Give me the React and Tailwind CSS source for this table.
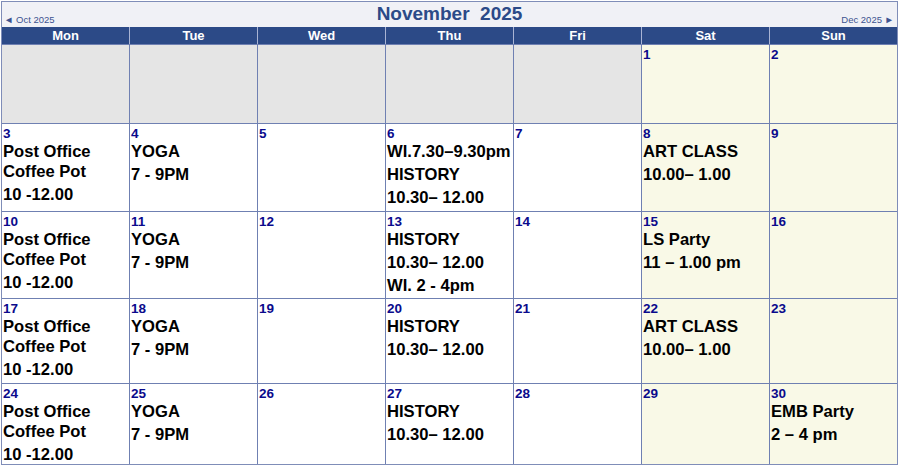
const days = ["Mon", "Tue", "Wed", "Thu", "Fri", "Sat", "Sun"];

const postOffice = [["Post Office", "Coffee Pot"], ["10 -12.00"]];
const yoga = [["YOGA"], ["7 - 9PM"]];
const history = [["HISTORY"], ["10.30– 12.00"]];
const artClass = [["ART CLASS"], ["10.00– 1.00"]];

const events = {
  3: postOffice,
  4: yoga,
  6: [["WI.7.30–9.30pm"], ["HISTORY"], ["10.30– 12.00"]],
  8: artClass,
  10: postOffice,
  11: yoga,
  13: [["HISTORY"], ["10.30– 12.00"], ["WI. 2 - 4pm"]],
  15: [["LS Party"], ["11 – 1.00 pm"]],
  17: postOffice,
  18: yoga,
  20: history,
  22: artClass,
  24: postOffice,
  25: yoga,
  27: history,
  30: [["EMB Party"], ["2 – 4 pm"]],
};

// first week starts on Mon 27 Oct, so five blanks before Sat 1
const cells = [];
for (let i = 0; i < 5; i++) cells.push(null);
for (let d = 1; d <= 30; d++) cells.push(d);

const rowHeights = "grid-rows-[78px_87px_86px_84px_80px]";

function DayCell({ day, col }) {
  const weekend = col >= 5;
  if (day === null) {
    return <div className="bg-[#e5e5e5]" />;
  }
  const items = events[day] || [];
  return (
    <div
      className={`${weekend ? "bg-[#f9f9e7]" : "bg-white"} pl-px pt-[3px] overflow-hidden`}
    >
      <div className="text-[13.5px] leading-[14px] font-bold text-[#0a0a8c]">
        {day}
      </div>
      {items.map((para, i) => (
        <div
          key={i}
          className={`${i === 0 ? "mt-px" : "mt-[3px]"} text-[16.6px] leading-[20px] font-bold text-black whitespace-nowrap`}
        >
          {para.map((line, j) => (
            <div key={j}>{line}</div>
          ))}
        </div>
      ))}
    </div>
  );
}

export default function App() {
  return (
    <div className="w-[900px] h-[466px] bg-white font-['Liberation_Sans',Arial,sans-serif]">
      <div className="ml-px mt-px w-[897px] border border-[#7f8db8] bg-[#f0f1f6]">
        {/* Title bar */}
        <div className="h-[25px] grid grid-cols-[1fr_auto_1fr]">
          <div className="self-end pb-[1px] pl-[2px] text-[9.5px] leading-[12px] text-[#3d5390]">
            ◄ Oct 2025
          </div>
          <div className="text-[19px] leading-[24px] font-bold text-[#2b4a88] whitespace-pre">
            November  2025
          </div>
          <div className="self-end justify-self-end pb-[1px] pr-[3px] text-[9.5px] leading-[12px] text-[#3d5390]">
            Dec 2025 ►
          </div>
        </div>

        {/* Weekday header */}
        <div className="grid grid-cols-[repeat(7,127px)] gap-px bg-[#a9b4d4] h-[17px]">
          {days.map((d) => (
            <div
              key={d}
              className="bg-[#2c4a87] text-white text-[13px] leading-[17px] font-bold text-center"
            >
              {d}
            </div>
          ))}
        </div>

        {/* Month grid */}
        <div
          className={`grid grid-cols-[repeat(7,127px)] ${rowHeights} gap-px bg-[#6f80b2] border-t border-[#6f80b2]`}
        >
          {cells.map((day, i) => (
            <DayCell key={i} day={day} col={i % 7} />
          ))}
        </div>
      </div>
    </div>
  );
}
